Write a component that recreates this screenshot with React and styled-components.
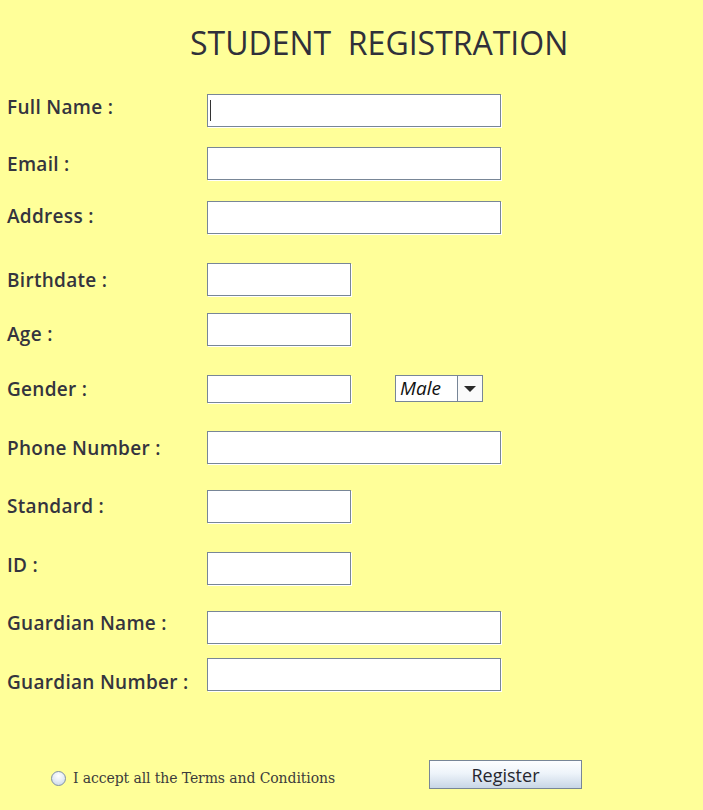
import React from 'react';
import styled, { createGlobalStyle } from 'styled-components';

const rows = [
  { label: 'Full Name :', size: 'wide', gap: 31, nudge: 1, caret: true },
  { label: 'Email :', size: 'wide', gap: 20, nudge: 5 },
  { label: 'Address :', size: 'wide', gap: 21, nudge: 3 },
  { label: 'Birthdate :', size: 'narrow', gap: 29, nudge: 5 },
  { label: 'Age :', size: 'narrow', gap: 17, nudge: 9 },
  { label: 'Gender :', size: 'narrow', gap: 29, nudge: 2, short: true, combo: 'Male' },
  { label: 'Phone Number :', size: 'wide', gap: 28, nudge: 5 },
  { label: 'Standard :', size: 'narrow', gap: 26, nudge: 4 },
  { label: 'ID :', size: 'narrow', gap: 29, nudge: 1 },
  { label: 'Guardian Name :', size: 'wide', gap: 26, nudge: 0 },
  { label: 'Guardian Number :', size: 'wide', gap: 14, nudge: 12 },
];

const App = () => {
  return (
    <Page>
      <GlobalStyle />
      <Title>STUDENT  REGISTRATION</Title>
      <Form>
        {rows.map((row) => (
          <Row key={row.label} $gap={row.gap}>
            <Label $nudge={row.nudge}>{row.label}</Label>
            <Field $size={row.size} $short={row.short}>
              {row.caret && <Caret />}
            </Field>
            {row.combo && (
              <Combo>
                <ComboText>{row.combo}</ComboText>
                <ComboArrow>
                  <Triangle />
                </ComboArrow>
              </Combo>
            )}
          </Row>
        ))}
      </Form>
      <Footer>
        <Agree>
          <Radio />
          <AgreeText>I accept all the Terms and Conditions</AgreeText>
        </Agree>
        <Button>Register</Button>
      </Footer>
    </Page>
  );
};

const GlobalStyle = createGlobalStyle`
  * {
    box-sizing: border-box;
  }
  body {
    margin: 0;
    background: #ffff99;
    font-family: "Open Sans", "Noto Sans", sans-serif;
  }
`;

const Page = styled.div`
  width: 703px;
  min-height: 810px;
  background: #ffff99;
  color: #34343e;
`;

const Title = styled.h1`
  margin: 0;
  padding: 23px 0 0 190px;
  font-size: 32px;
  line-height: 40px;
  font-weight: 500;
  white-space: pre;
  color: #30303a;
`;

const Form = styled.div`
  display: flex;
  flex-direction: column;
`;

const Row = styled.div`
  display: flex;
  align-items: flex-start;
  margin-top: ${({ $gap }) => $gap}px;
  padding-left: 7px;
`;

const Label = styled.div`
  width: 200px;
  margin-top: ${({ $nudge }) => $nudge}px;
  font-size: 19px;
  line-height: 24px;
  font-weight: 600;
  letter-spacing: 0.3px;
`;

const Field = styled.div`
  display: flex;
  align-items: center;
  width: ${({ $size }) => ($size === 'wide' ? '294px' : '144px')};
  height: ${({ $short }) => ($short ? '28px' : '33px')};
  padding-left: 2px;
  background: #ffffff;
  border: 1px solid #788697;
  box-shadow: 1px 1px 0 #ffffff;
`;

const Caret = styled.span`
  width: 1px;
  height: 21px;
  background: #333333;
`;

const Combo = styled.div`
  display: flex;
  width: 88px;
  height: 27px;
  margin-left: 44px;
  border: 1px solid #788697;
  background: #ffffff;
`;

const ComboText = styled.div`
  flex: 1;
  padding-left: 4px;
  font-size: 19px;
  line-height: 25px;
  font-style: italic;
  color: #111111;
`;

const ComboArrow = styled.div`
  display: flex;
  align-items: center;
  justify-content: center;
  width: 25px;
  border-left: 1px solid #788697;
  background: #fafafa;
`;

const Triangle = styled.span`
  width: 0;
  height: 0;
  border-left: 6px solid transparent;
  border-right: 6px solid transparent;
  border-top: 6px solid #2a2a2a;
`;

const Footer = styled.div`
  display: grid;
  grid-template-columns: 378px 153px;
  align-items: start;
  margin-top: 66px;
  padding-left: 51px;
`;

const Agree = styled.label`
  display: flex;
  align-items: center;
  gap: 7px;
  height: 18px;
  margin-top: 9px;
`;

const Radio = styled.span`
  width: 15px;
  height: 15px;
  border-radius: 50%;
  border: 1px solid #7f90a6;
  background: radial-gradient(circle at 50% 30%, #ffffff 0%, #e8eef6 45%, #c3d2e4 100%);
`;

const AgreeText = styled.span`
  font-family: "DejaVu Serif", "Liberation Serif", serif;
  font-size: 14px;
  letter-spacing: -0.1px;
  color: #3c3c3c;
`;

const Button = styled.button`
  width: 153px;
  height: 29px;
  padding: 0;
  border: 1px solid #788697;
  border-radius: 0;
  background: linear-gradient(#fdfeff 0%, #eef4fa 45%, #c8d6e6 100%);
  font-family: "Open Sans", "Noto Sans", sans-serif;
  font-size: 18px;
  font-weight: 500;
  color: #26262e;
  cursor: pointer;
`;

export default App;
